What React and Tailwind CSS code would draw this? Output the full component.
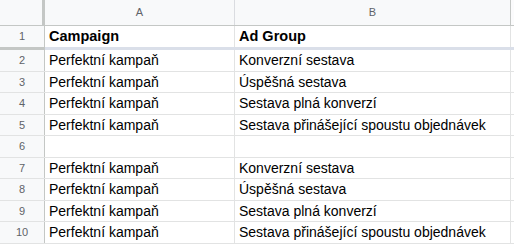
import React from 'react';

const rows = [
  ['Perfektní kampaň', 'Konverzní sestava'],
  ['Perfektní kampaň', 'Úspěšná sestava'],
  ['Perfektní kampaň', 'Sestava plná konverzí'],
  ['Perfektní kampaň', 'Sestava přinášející spoustu objednávek'],
  ['', ''],
  ['Perfektní kampaň', 'Konverzní sestava'],
  ['Perfektní kampaň', 'Úspěšná sestava'],
  ['Perfektní kampaň', 'Sestava plná konverzí'],
  ['Perfektní kampaň', 'Sestava přinášející spoustu objednávek'],
];

const heights = ['h-[22px]', 'h-[21px]', 'h-[22px]', 'h-[21px]', 'h-[22px]', 'h-[21px]', 'h-[22px]', 'h-[21px]', 'h-[22px]'];

const App = () => {
  return (
    <div className="w-[514px] h-[250px] overflow-hidden bg-white font-['Liberation_Sans',Arial,sans-serif] text-[14px] text-black">
      {/* Column header */}
      <div className="flex h-[26px] bg-[#f8f9fa] border-b border-[#c4c7c5]">
        <div className="w-[45px] shrink-0 border-r-[3px] border-[#c4c7c5]"></div>
        <div className="w-[190px] shrink-0 border-r border-[#dadce0] flex items-center justify-center text-[11px] text-[#5f6368]">A</div>
        <div className="w-[276px] shrink-0 border-r border-[#c4c7c5] flex items-center justify-center text-[11px] text-[#5f6368]">B</div>
        <div className="flex-1 bg-[#fbfbfc]"></div>
      </div>

      {/* Frozen header row */}
      <div className="flex h-[21px]">
        <div className="w-[45px] shrink-0 bg-[#f8f9fa] border-r border-[#c4c7c5] flex items-center justify-center text-[11px] text-[#5f6368]">1</div>
        <div className="w-[190px] shrink-0 border-r border-[#e2e3e3] flex items-center pl-[4px] font-bold text-[14.5px]">Campaign</div>
        <div className="w-[276px] shrink-0 border-r border-[#e2e3e3] flex items-center pl-[4px] font-bold text-[14.5px]">Ad Group</div>
        <div className="flex-1"></div>
      </div>
      <div className="flex h-[3px]">
        <div className="w-[45px] shrink-0 bg-[#c4c7c5]"></div>
        <div className="flex-1 bg-[#dadfe9]"></div>
      </div>

      {rows.map((r, i) => (
        <div key={i} className={`flex ${heights[i]} border-b border-[#e2e3e3]`}>
          <div className="w-[45px] shrink-0 bg-[#f8f9fa] border-r border-[#c4c7c5] flex items-center justify-center text-[11px] text-[#5f6368]">{i + 2}</div>
          <div className="w-[190px] shrink-0 border-r border-[#e2e3e3] flex items-center pl-[4px] whitespace-nowrap">{r[0]}</div>
          <div className="w-[276px] shrink-0 border-r border-[#e2e3e3] flex items-center pl-[4px] whitespace-nowrap">{r[1]}</div>
          <div className="flex-1"></div>
        </div>
      ))}
    </div>
  );
};

export default App;
